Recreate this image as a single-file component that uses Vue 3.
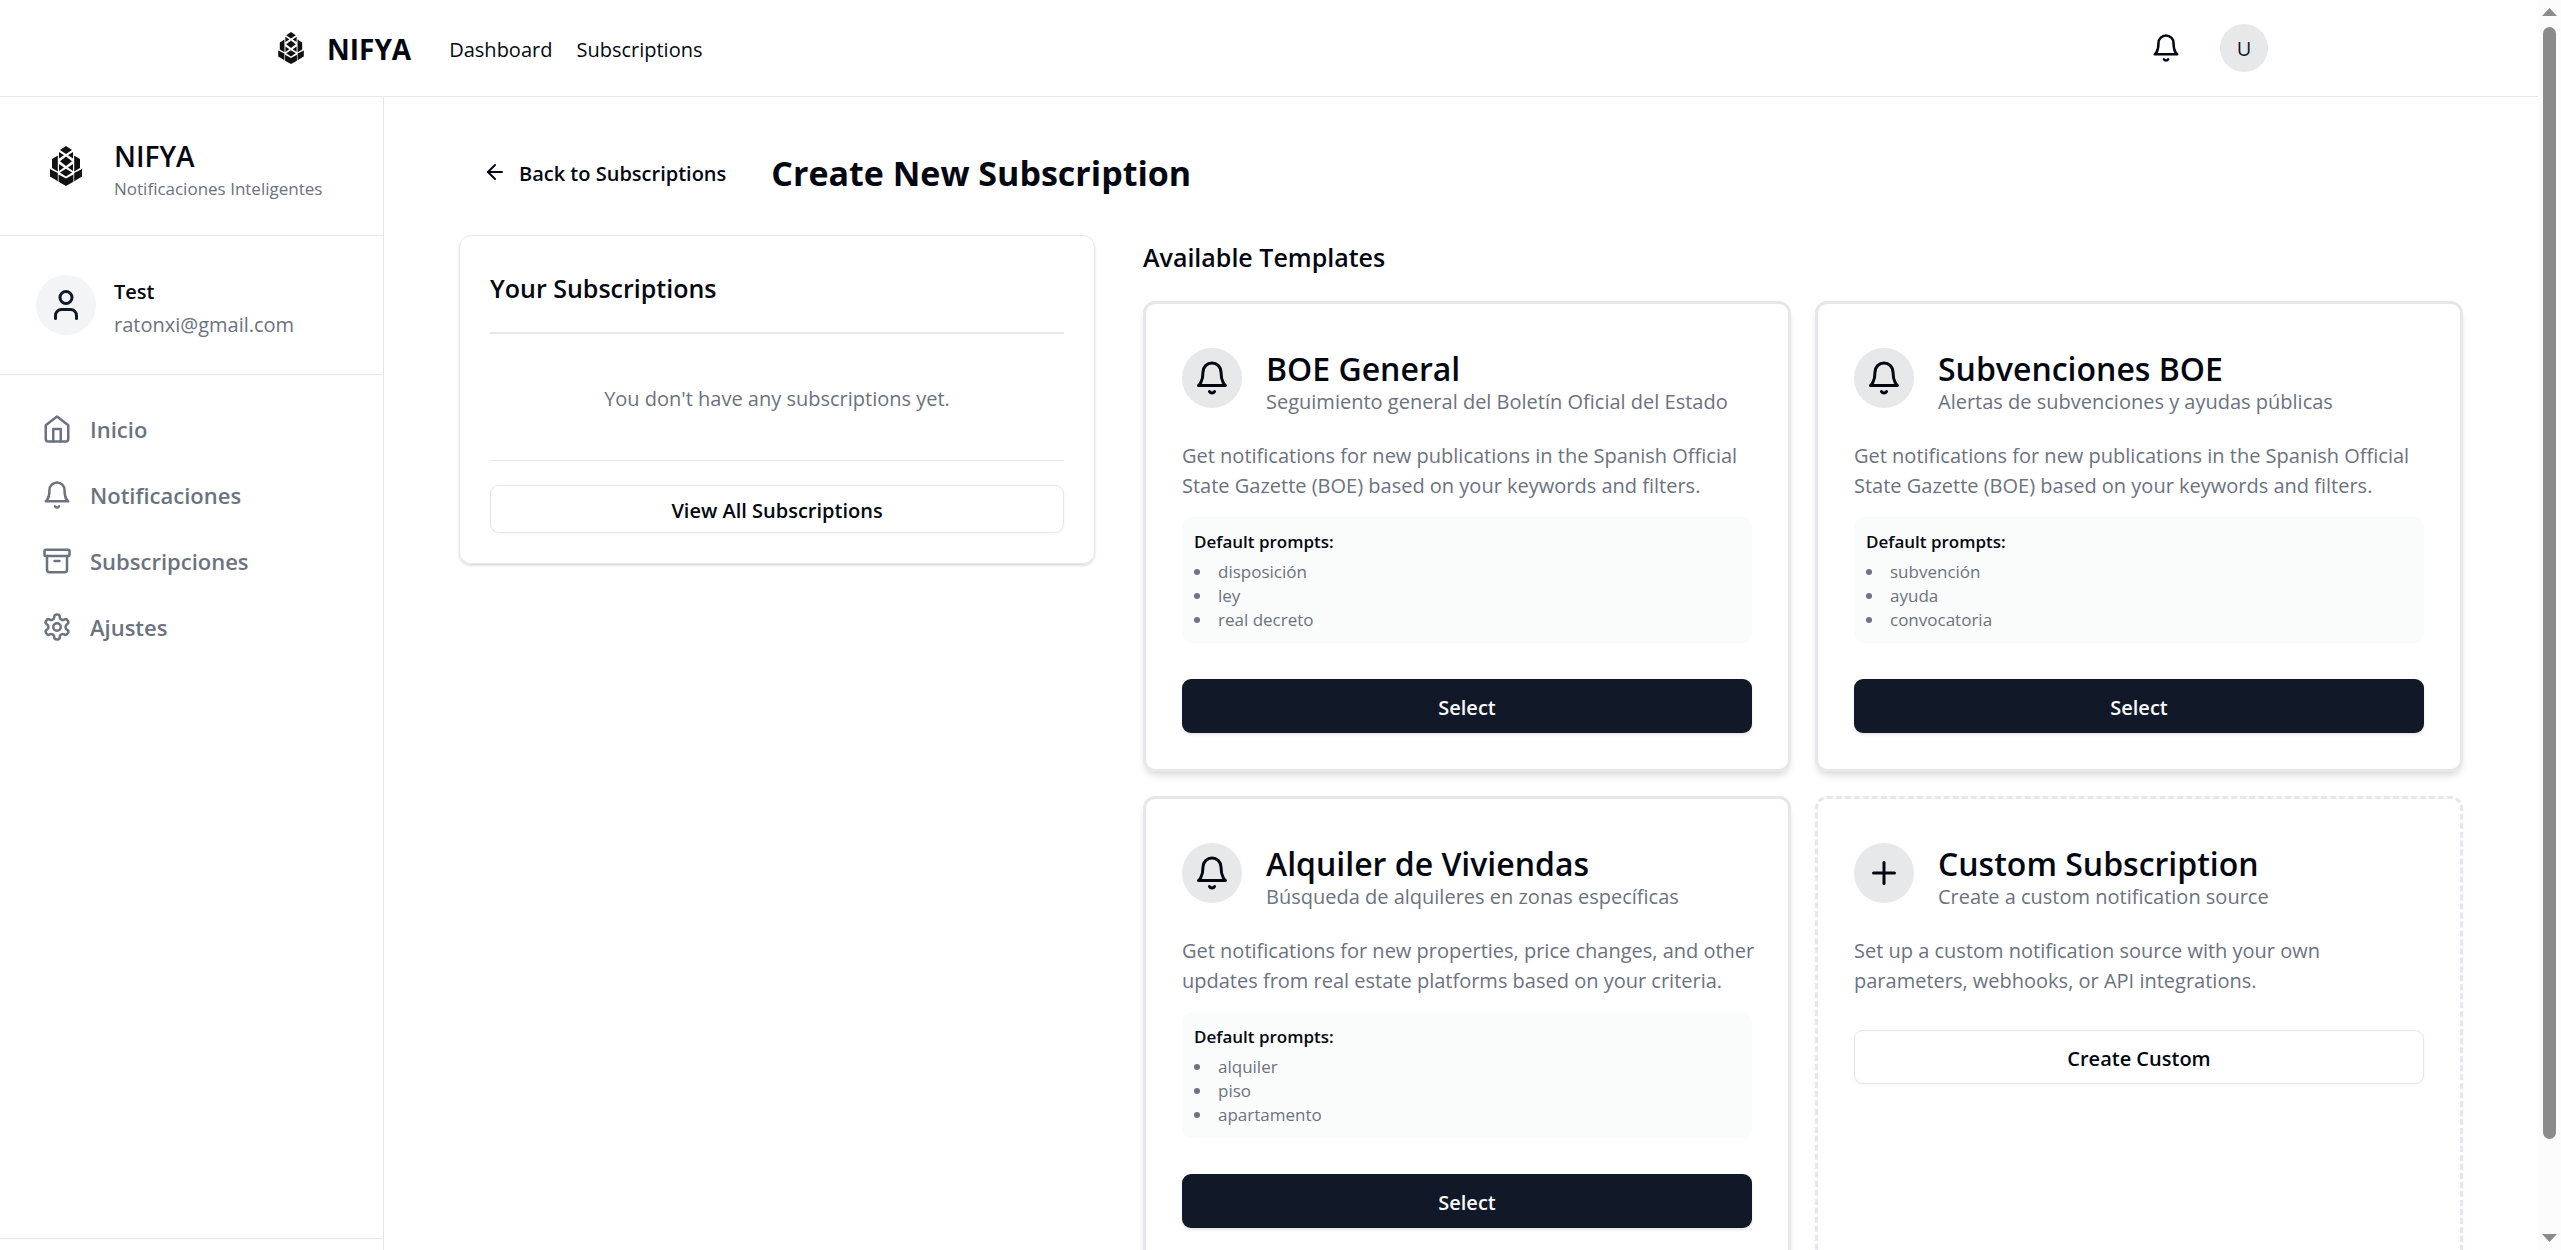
<script setup>
import { h } from 'vue'

const shapes = {
  bell: ['M6 8a6 6 0 0 1 12 0c0 7 3 9 3 9H3s3-2 3-9', 'M10.3 21a1.94 1.94 0 0 0 3.4 0'],
  home: ['m3 9 9-7 9 7v11a2 2 0 0 1-2 2H5a2 2 0 0 1-2-2z', 'M9 22V12h6v10'],
  archive: ['M3 3h18a1 1 0 0 1 1 1v3a1 1 0 0 1-1 1H3a1 1 0 0 1-1-1V4a1 1 0 0 1 1-1z', 'M4 8v11a2 2 0 0 0 2 2h12a2 2 0 0 0 2-2V8', 'M10 12h4'],
  settings: [
    'M12.22 2h-.44a2 2 0 0 0-2 2v.18a2 2 0 0 1-1 1.73l-.43.25a2 2 0 0 1-2 0l-.15-.08a2 2 0 0 0-2.73.73l-.22.38a2 2 0 0 0 .73 2.73l.15.1a2 2 0 0 1 1 1.72v.51a2 2 0 0 1-1 1.74l-.15.09a2 2 0 0 0-.73 2.73l.22.38a2 2 0 0 0 2.73.73l.15-.08a2 2 0 0 1 2 0l.43.25a2 2 0 0 1 1 1.73V20a2 2 0 0 0 2 2h.44a2 2 0 0 0 2-2v-.18a2 2 0 0 1 1-1.73l.43-.25a2 2 0 0 1 2 0l.15.08a2 2 0 0 0 2.73-.73l.22-.39a2 2 0 0 0-.73-2.73l-.15-.08a2 2 0 0 1-1-1.74v-.5a2 2 0 0 1 1-1.74l.15-.09a2 2 0 0 0 .73-2.73l-.22-.38a2 2 0 0 0-2.73-.73l-.15.08a2 2 0 0 1-2 0l-.43-.25a2 2 0 0 1-1-1.73V4a2 2 0 0 0-2-2z',
    'M15 12a3 3 0 1 1-6 0 3 3 0 0 1 6 0z'
  ],
  user: ['M19 21v-2a4 4 0 0 0-4-4H9a4 4 0 0 0-4 4v2', 'M16 7a4 4 0 1 1-8 0 4 4 0 0 1 8 0z'],
  plus: ['M5 12h14', 'M12 5v14'],
  arrow: ['m12 19-7-7 7-7', 'M19 12H5']
}

const Icon = ({ name, size }) =>
  h('svg', {
    width: size, height: size, viewBox: '0 0 24 24', fill: 'none', stroke: 'currentColor',
    'stroke-width': 2, 'stroke-linecap': 'round', 'stroke-linejoin': 'round', 'aria-hidden': 'true'
  }, shapes[name].map((d) => h('path', { d })))
Icon.props = ['name', 'size']

const logoPolygons = [
  '16,0 22,4 16,8 10,4',
  '9,6 14,9.3 9,12.6', '23,6 18,9.3 23,12.6',
  '16,10.5 22,15.2 16,20 10,15.2',
  '9,18 14,21.5 9,25', '23,18 18,21.5 23,25',
  '16,22.7 22,26.6 16,30.5 10,26.6',
  '2,13 7.8,9.5 7.8,25.4 2,22', '30,13 24.2,9.5 24.2,25.4 30,22',
  '0,23 7.8,27 7.8,35.2 0,30.5', '32,23 24.2,27 24.2,35.2 32,30.5',
  '8.6,28.5 16,32.6 23.4,28.5 23.4,35.8 16,40 8.6,35.8'
]
const Logo = ({ width, height }) =>
  h('svg', { width, height, viewBox: '0 0 32 40', fill: '#111', 'aria-hidden': 'true' },
    logoPolygons.map((points) => h('polygon', { points })))
Logo.props = ['width', 'height']

const navItems = [
  { icon: 'home', label: 'Inicio' },
  { icon: 'bell', label: 'Notificaciones' },
  { icon: 'archive', label: 'Subscripciones' },
  { icon: 'settings', label: 'Ajustes' }
]

const boeText = 'Get notifications for new publications in the Spanish Official State Gazette (BOE) based on your keywords and filters.'
const templates = [
  { title: 'BOE General', subtitle: 'Seguimiento general del Boletín Oficial del Estado', text: boeText, prompts: ['disposición', 'ley', 'real decreto'] },
  { title: 'Subvenciones BOE', subtitle: 'Alertas de subvenciones y ayudas públicas', text: boeText, prompts: ['subvención', 'ayuda', 'convocatoria'] },
  { title: 'Alquiler de Viviendas', subtitle: 'Búsqueda de alquileres en zonas específicas', text: 'Get notifications for new properties, price changes, and other updates from real estate platforms based on your criteria.', prompts: ['alquiler', 'piso', 'apartamento'] }
]
</script>

<template>
  <div class="window">
    <div class="page">
      <header class="topbar">
        <div class="topbar-inner">
          <a class="brand" href="#">
            <span class="brand-mark"><Logo :width="26" :height="32" /></span>
            <span class="brand-name">NIFYA</span>
          </a>
          <nav class="top-links">
            <a href="#">Dashboard</a>
            <a href="#">Subscriptions</a>
          </nav>
          <div class="top-actions">
            <button class="bell-button" type="button" aria-label="Notifications"><Icon name="bell" :size="30" /></button>
            <button class="avatar-button" type="button"><span class="avatar">U</span></button>
          </div>
        </div>
      </header>

      <div class="body">
        <aside class="sidebar">
          <div class="side-block">
            <span class="side-mark"><Logo :width="32" :height="40" /></span>
            <div class="side-text">
              <div class="side-name">NIFYA</div>
              <div class="side-tagline">Notificaciones Inteligentes</div>
            </div>
          </div>
          <div class="side-block">
            <span class="user-circle"><Icon name="user" :size="36" /></span>
            <div class="side-text">
              <div class="user-name">Test</div>
              <div class="user-mail">ratonxi@gmail.com</div>
            </div>
          </div>
          <nav class="side-nav">
            <a v-for="item in navItems" :key="item.label" href="#">
              <Icon :name="item.icon" :size="30" />{{ item.label }}
            </a>
          </nav>
          <div class="side-footer"></div>
        </aside>

        <main class="main">
          <div class="container">
            <div class="title-row">
              <button class="back" type="button"><Icon name="arrow" :size="24" /><span>Back to Subscriptions</span></button>
              <h1>Create New Subscription</h1>
            </div>

            <div class="columns">
              <section class="own">
                <h2>Your Subscriptions</h2>
                <p class="empty">You don't have any subscriptions yet.</p>
                <div class="own-footer">
                  <button class="outline short" type="button">View All Subscriptions</button>
                </div>
              </section>

              <section class="available">
                <h2>Available Templates</h2>
                <div class="cards">
                  <article v-for="t in templates" :key="t.title" class="card">
                    <div class="card-head">
                      <span class="circle"><Icon name="bell" :size="36" /></span>
                      <div class="card-titles">
                        <h3>{{ t.title }}</h3>
                        <p>{{ t.subtitle }}</p>
                      </div>
                    </div>
                    <p class="text">{{ t.text }}</p>
                    <div class="prompts">
                      <h4>Default prompts:</h4>
                      <ul>
                        <li v-for="p in t.prompts" :key="p">{{ p }}</li>
                      </ul>
                    </div>
                    <button class="select" type="button">Select</button>
                  </article>

                  <article class="card custom">
                    <div class="card-head">
                      <span class="circle"><Icon name="plus" :size="36" /></span>
                      <div class="card-titles">
                        <h3>Custom Subscription</h3>
                        <p>Create a custom notification source</p>
                      </div>
                    </div>
                    <p class="text">Set up a custom notification source with your own parameters, webhooks, or API integrations.</p>
                    <button class="outline" type="button">Create Custom</button>
                  </article>
                </div>
              </section>
            </div>
          </div>
        </main>
      </div>
    </div>

    <div class="scrollbar" aria-hidden="true">
      <svg width="15" height="8" viewBox="0 0 15 8"><path d="M7.500 0 15 8H0z" fill="#8b8b8b" /></svg>
      <div class="track"><div class="thumb"></div></div>
      <svg width="15" height="8" viewBox="0 0 15 8"><path d="M0 0h15L7.500 8z" fill="#8b8b8b" /></svg>
    </div>
  </div>
</template>

<style>
html, body { background: #fff; }
body { overflow: hidden; }
</style>

<style scoped>
* { box-sizing: border-box; }
h1, h2, h3, h4, p, ul { margin: 0; padding: 0; }
svg { display: block; flex: none; }
a { color: inherit; text-decoration: none; }
button { font: inherit; color: inherit; background: none; border: 0; padding: 0; cursor: pointer; }

.window {
  display: flex;
  height: 100vh;
  overflow: hidden;
  font: 400 20px/30px "Open Sans", "Noto Sans", sans-serif;
  color: #030712;
  background: #fff;
}
.page { flex: 1; min-width: 0; display: flex; flex-direction: column; }

.topbar { flex: none; border-bottom: 1px solid #e5e7eb; }
.topbar-inner {
  max-width: 2100px;
  height: 96px;
  margin: 0 auto;
  padding: 0 48px;
  display: flex;
  align-items: center;
}
.brand { display: flex; align-items: center; gap: 12px; }
.brand-mark { width: 48px; height: 48px; display: flex; align-items: center; justify-content: center; }
.brand-name { padding-top: 2px; font-size: 28px; line-height: 42px; font-weight: 700; }
.top-links { display: flex; gap: 24px; margin-left: 38px; padding-top: 3px; font-weight: 500; }
.top-actions { margin-left: auto; display: flex; align-items: center; gap: 24px; }
.bell-button { width: 54px; height: 54px; display: flex; align-items: center; justify-content: center; }
.avatar-button { padding: 3px; }
.avatar {
  width: 48px; height: 48px; border-radius: 50%; padding-top: 2px;
  display: flex; align-items: center; justify-content: center;
  background: #e7e8e9; color: #111827; font-weight: 500;
}

.body { flex: 1; min-height: 0; display: flex; }
.sidebar { flex: none; width: 384px; border-right: 1px solid #e5e7eb; display: flex; flex-direction: column; }
.side-block {
  display: flex; align-items: center; gap: 18px;
  padding: 36px; border-bottom: 1px solid #e5e7eb;
}
.side-mark, .user-circle { flex: none; width: 60px; height: 60px; display: flex; align-items: center; justify-content: center; }
.user-circle { border-radius: 50%; background: #f3f4f6; color: #111827; }
.side-text { padding-top: 2px; margin-bottom: -2px; }
.side-name { font-size: 28px; line-height: 42px; font-weight: 600; }
.side-tagline { font-size: 17px; line-height: 24px; color: #6b7280; }
.user-name { line-height: 36px; font-weight: 600; }
.user-mail { color: #6b7280; }
.side-nav { flex: 1; padding: 24px; display: flex; flex-direction: column; gap: 6px; }
.side-nav a {
  height: 60px; padding: 0 18px;
  display: flex; align-items: center; gap: 18px;
  font-size: 22px; font-weight: 600; color: #6b7280;
}
.side-footer { height: 12px; border-top: 1px solid #e5e7eb; }

.main { flex: 1; min-width: 0; overflow: hidden; }
.container { max-width: 2100px; margin: 0 auto; padding: 48px; }
.title-row { display: flex; align-items: center; gap: 21px; margin-bottom: 36px; }
.back { height: 54px; padding: 0 24px; display: flex; align-items: center; gap: 12px; font-weight: 600; }
.back span { padding-top: 3px; }
h1 { padding-top: 3px; font-size: 34px; line-height: 51px; font-weight: 700; }

.columns { display: grid; grid-template-columns: repeat(3, minmax(0, 1fr)); gap: 48px; align-items: start; }
h2 { padding-top: 2px; font-size: 25px; line-height: 40px; font-weight: 600; }
.own {
  border: 1px solid #e5e7eb; border-radius: 12px; padding: 30px;
  box-shadow: 0 2px 3px rgba(0, 0, 0, 0.1), 0 1px 2px rgba(0, 0, 0, 0.06);
}
.own h2 { padding-bottom: 24px; border-bottom: 2px solid #e5e7eb; }
.empty { padding: 50px 0 46px; text-align: center; color: #6b7280; }
.own-footer { border-top: 1px solid #e5e7eb; padding-top: 24px; }
.outline, .select { display: block; width: 100%; height: 54px; padding-top: 3px; border-radius: 9px; font-weight: 600; }
.outline { border: 1px solid #e5e7eb; background: #fff; box-shadow: 0 1px 3px rgba(0, 0, 0, 0.05); }
.short { height: 48px; }
.select { background: #111827; color: #f9fafb; box-shadow: 0 2px 3px rgba(0, 0, 0, 0.1); }

.available { grid-column: span 2; }
.available h2 { margin-bottom: 24px; }
.cards { display: grid; grid-template-columns: repeat(2, minmax(0, 1fr)); gap: 24px; }
.card {
  border: 3px solid #e5e7eb; border-radius: 12px; padding: 36px;
  box-shadow: 0 6px 9px -2px rgba(0, 0, 0, 0.1), 0 3px 6px -3px rgba(0, 0, 0, 0.1);
}
.custom { border-style: dashed; box-shadow: 0 2px 3px rgba(0, 0, 0, 0.06); }
.card-head { height: 75px; display: flex; align-items: center; gap: 24px; margin-bottom: 26px; }
.circle {
  flex: none; width: 60px; height: 60px; border-radius: 50%; background: #e7e8e9;
  display: flex; align-items: center; justify-content: center;
}
.card-titles { align-self: flex-end; margin-bottom: -2px; }
h3 { font-size: 32px; line-height: 36px; font-weight: 600; }
.card-titles p, .text { color: #6b7280; }
.text { margin-right: -12px; }
.prompts { margin: 16px 0 36px; padding: 13px 12px 11px; border-radius: 9px; background: #fafcfb; font-size: 17px; line-height: 24px; }
h4 { font-size: 17px; line-height: 24px; font-weight: 600; margin-bottom: 6px; }
ul { list-style: disc inside; color: #6b7280; }
.custom .outline { margin-top: 34px; }

.scrollbar {
  flex: none; width: 23px; padding: 8px 0;
  display: flex; flex-direction: column; align-items: center; gap: 11px;
  background: #fcfcfc;
}
.track { flex: 1; width: 13px; }
.thumb { height: 93%; border-radius: 7px; background: #8b8b8b; }
</style>
